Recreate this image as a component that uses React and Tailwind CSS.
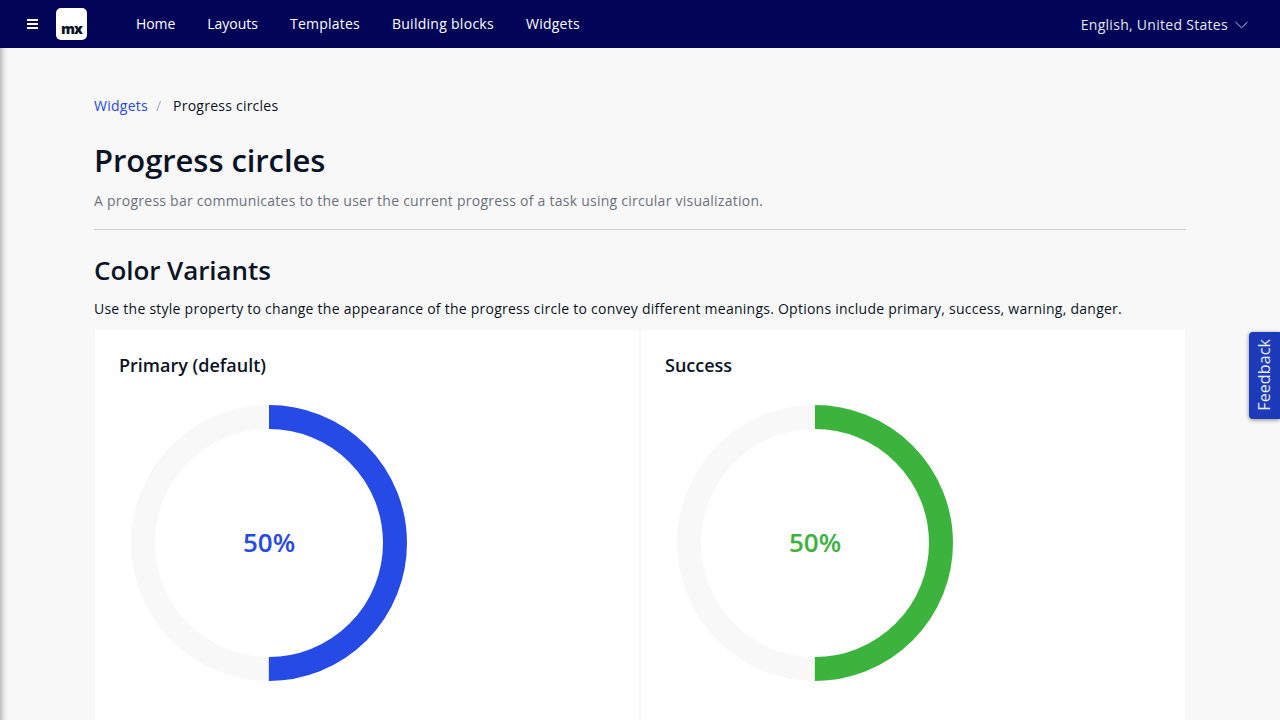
import React from "react";

const NAV_ITEMS = [
  { label: "Home", spacing: "tracking-[-0.1px]" },
  { label: "Layouts", spacing: "tracking-[0px]" },
  { label: "Templates", spacing: "tracking-[0.22px]" },
  { label: "Building blocks", spacing: "tracking-[0.28px]" },
  { label: "Widgets", spacing: "tracking-[0.25px]" },
];

const VARIANTS = [
  { title: "Primary (default)", color: "#264ae5", value: 50 },
  { title: "Success", color: "#3cb33d", value: 50 },
];

function MenuIcon() {
  return (
    <svg className="block" width="11" height="10" viewBox="0 0 11 10" fill="#fff" shapeRendering="crispEdges">
      <path d="M0 0h11v2H0zM0 4h11v2H0zM0 8h11v2H0z" />
    </svg>
  );
}

function Logo() {
  return (
    <div className="flex h-8 w-[31px] items-end justify-center rounded-[5px] bg-white pb-[3px]">
      <span className="text-[14px] leading-4 font-extrabold tracking-[-0.9px] text-[#0a1325]">mx</span>
    </div>
  );
}

function ProgressCircle({ value, color }) {
  const radius = 126;
  const length = 2 * Math.PI * radius;
  return (
    <div className="relative h-[276px] w-[276px]">
      <svg className="block -rotate-90" width="276" height="276" viewBox="0 0 276 276" fill="none" strokeWidth="24">
        <circle cx="138" cy="138" r={radius} stroke="#f8f8f8" />
        <circle cx="138" cy="138" r={radius} stroke={color} strokeDasharray={`${(length * value) / 100} ${length}`} />
      </svg>
      <div
        className="absolute inset-0 flex items-center justify-center pb-[3px] text-[26px] leading-none font-semibold"
        style={{ color }}
      >
        {value}%
      </div>
    </div>
  );
}

export default function App() {
  return (
    <div className="relative flex h-[720px] w-full flex-col overflow-hidden bg-[#f8f8f8] font-['Open_Sans',sans-serif] text-sm text-[#0a1325]">
      <header className="flex h-12 shrink-0 items-center bg-[#020557] text-white">
        <button className="ml-[27px]" aria-label="Menu">
          <MenuIcon />
        </button>
        <div className="ml-[18px]">
          <Logo />
        </div>
        <nav className="ml-[49px] flex gap-8 leading-5">
          {NAV_ITEMS.map((item) => (
            <a key={item.label} href="#" className={item.spacing}>{item.label}</a>
          ))}
        </nav>
        <div className="mt-0.5 mr-8 ml-auto flex items-center gap-[7px] leading-5 text-[#e6e6ee]">
          <span className="tracking-[0.29px]">English, United States</span>
          <svg className="block" width="13" height="8" viewBox="0 0 13 8" fill="none" stroke="#c4c5d8">
            <path d="M.5 1l6 5.8 6-5.8" />
          </svg>
        </div>
      </header>

      <div className="flex min-h-0 flex-1">
        <aside className="w-2 shrink-0 bg-linear-to-r from-[#bcbcbc] via-[#e8e8e8] to-[#f8f8f8]" />
        <main className="mx-auto w-[1092px] -translate-x-1 pt-12">
          <div className="flex leading-5">
            <a href="#" className="tracking-[0.25px] text-[#264ae5]">Widgets</a>
            <span className="ml-2 text-[#a9acb3]">/</span>
            <span className="ml-3 tracking-[0.24px]">Progress circles</span>
          </div>
          <h1 className="mt-[23px] text-[31px] leading-[42px] font-semibold tracking-[-0.07px]">Progress circles</h1>
          <p className="mt-[10px] leading-5 tracking-[0.25px] text-[#6c717e]">
            A progress bar communicates to the user the current progress of a task using circular visualization.
          </p>
          <hr className="mt-[18px] border-[#ced0d3]" />
          <h2 className="mt-[22px] text-[26px] leading-[36px] font-semibold tracking-[-0.07px]">Color Variants</h2>
          <p className="mt-[11px] leading-5 tracking-[0.246px]">
            Use the style property to change the appearance of the progress circle to convey different meanings. Options
            include primary, success, warning, danger.
          </p>
          <div className="mt-[10px] grid grid-cols-2">
            {VARIANTS.map((variant) => (
              <section key={variant.title} className="h-[420px] border border-[#f8f8f8] bg-white px-6 pt-[23px]">
                <h4 className="text-[18px] leading-6 font-semibold">{variant.title}</h4>
                <div className="mt-7 ml-3">
                  <ProgressCircle value={variant.value} color={variant.color} />
                </div>
              </section>
            ))}
          </div>
        </main>
      </div>

      <button className="absolute top-[332px] right-0 flex h-[87px] w-[31px] items-center justify-center rounded-l-[4px] bg-[#1d3ab8] pr-0.5 pb-px text-base text-[#e8ebf8] shadow-[0_1px_4px_rgba(0,0,0,0.45)]">
        <span className="rotate-180 tracking-[0.12px] [writing-mode:vertical-rl]">Feedback</span>
      </button>
    </div>
  );
}
